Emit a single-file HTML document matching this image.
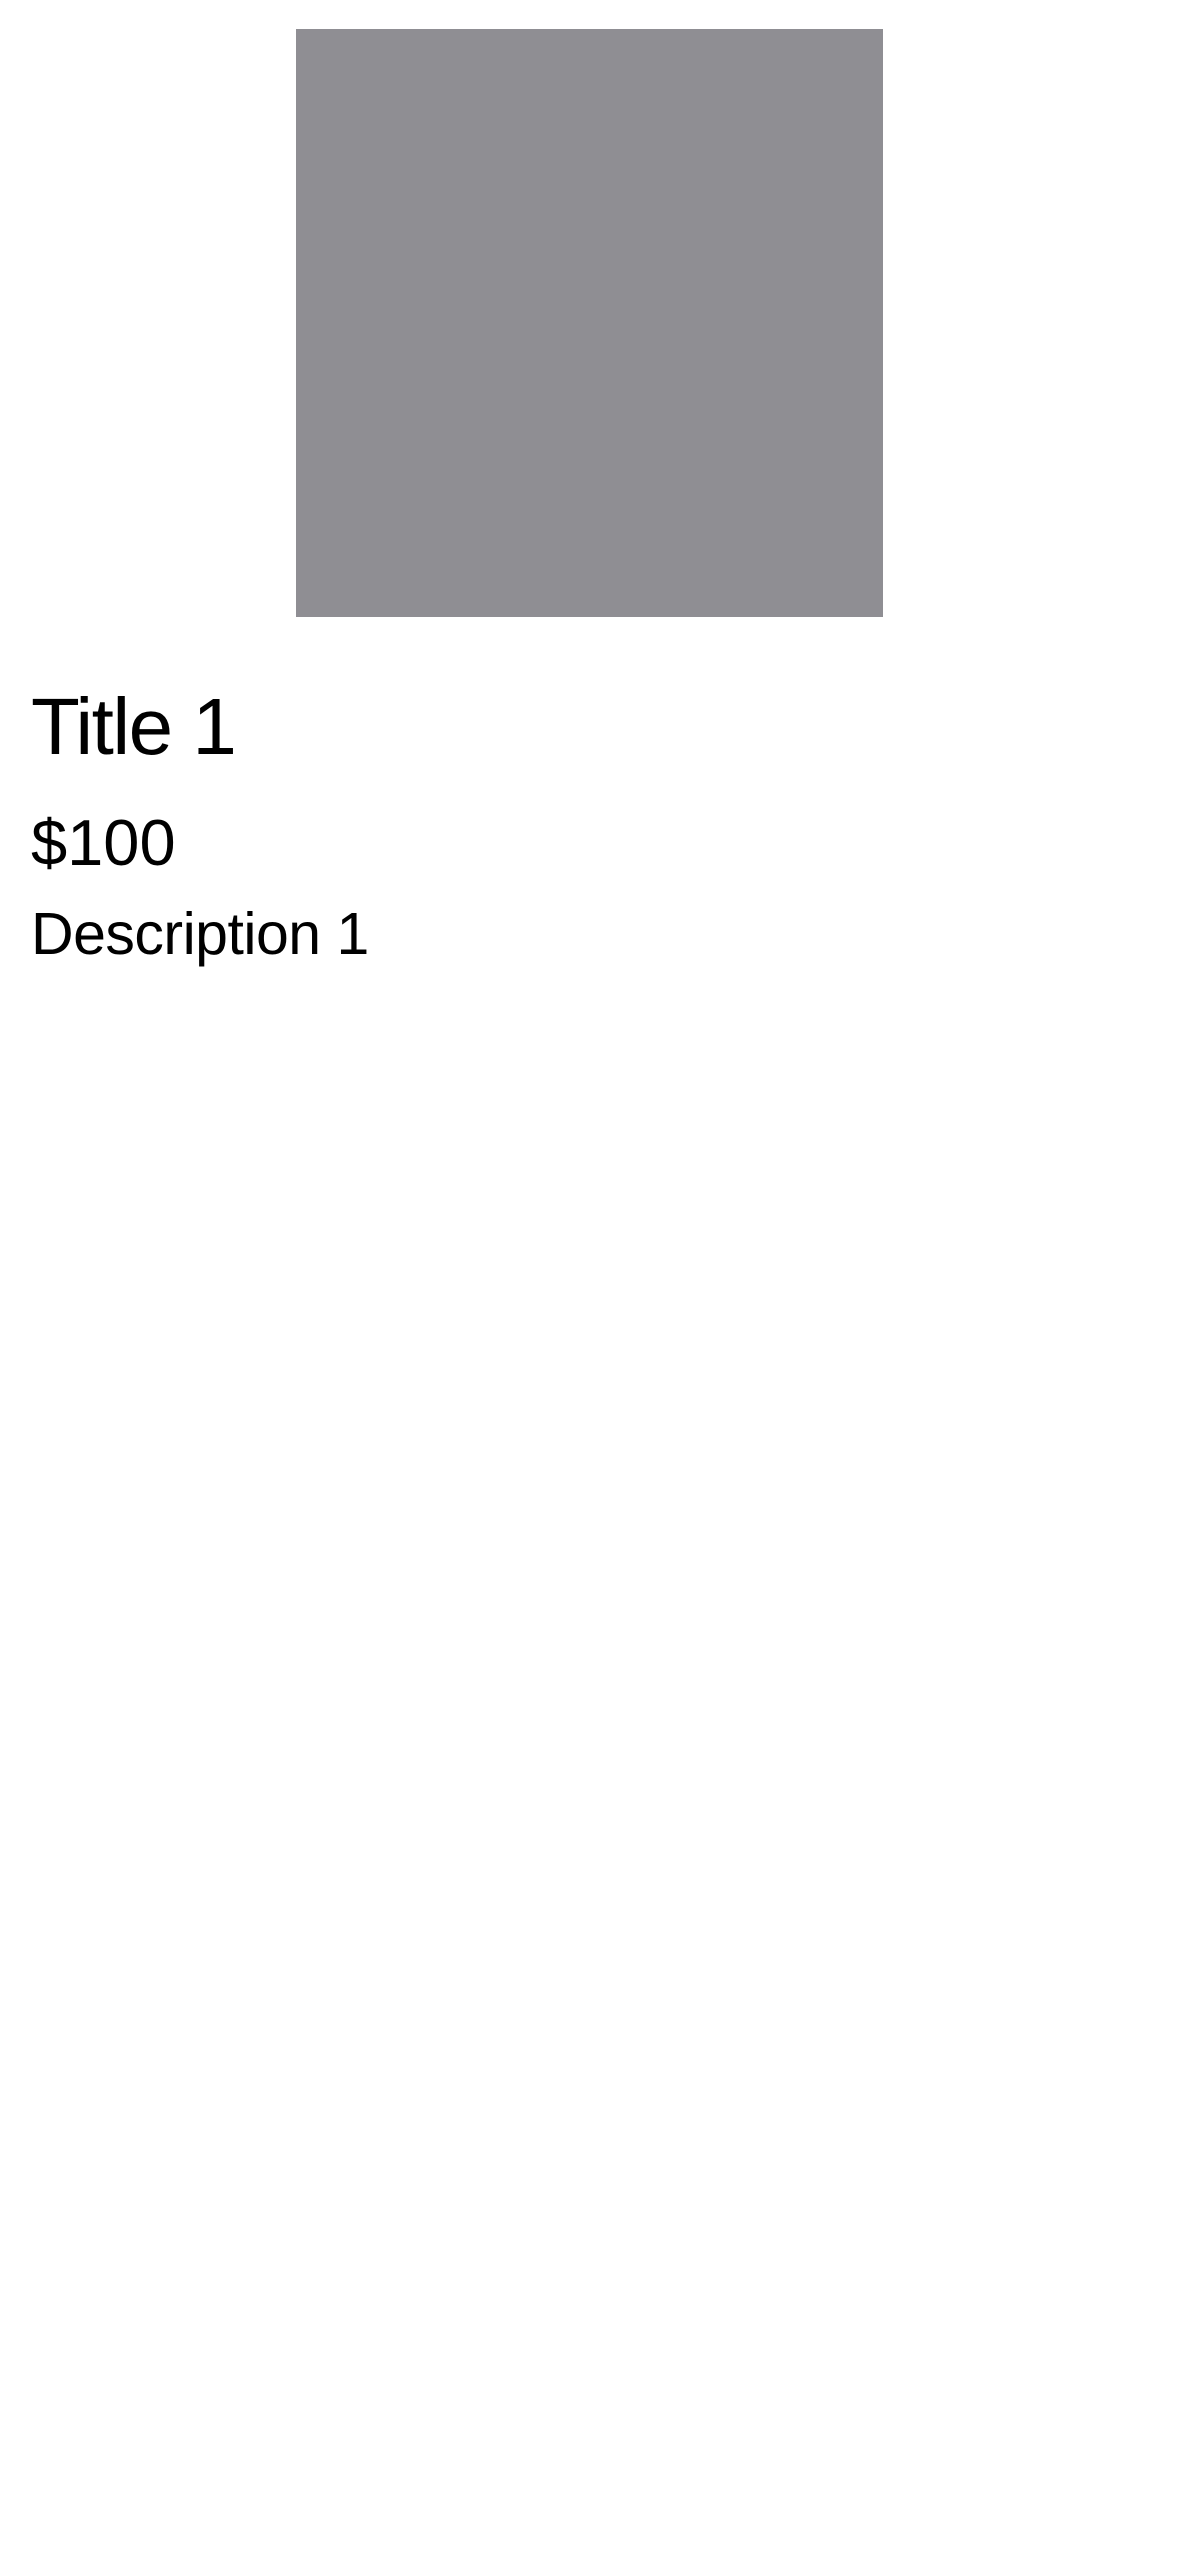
<!DOCTYPE html>
<html><head><meta charset="utf-8"><style>
html,body{margin:0;padding:0;background:#fff;width:1179px;height:2556px;overflow:hidden;font-family:"Liberation Sans",sans-serif;color:#000}
.sq{position:absolute;left:296px;top:29px;width:587px;height:588px;background:#8f8e93}
.t{position:absolute;left:31px;line-height:1;white-space:nowrap}
</style></head><body>
<div class="sq"></div>
<div class="t" style="top:687px;font-size:80px;letter-spacing:-1.5px">Title 1</div>
<div class="t" style="top:810px;font-size:65px">$100</div>
<div class="t" style="top:905px;font-size:59px;letter-spacing:-0.5px">Description 1</div>
</body></html>
